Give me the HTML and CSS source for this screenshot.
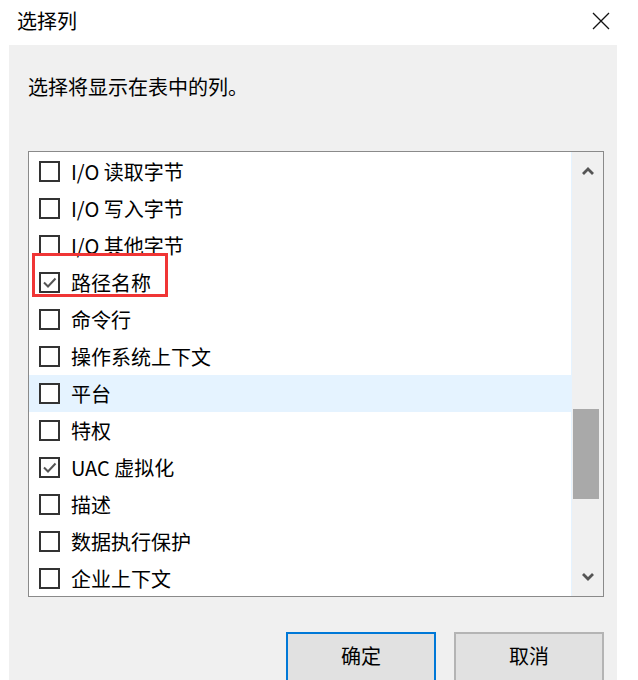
FILE: index.html
```html
<!DOCTYPE html>
<html lang="zh-CN">
<head>
<meta charset="utf-8">
<title>选择列</title>
<link rel="stylesheet" href="styles.css">
</head>
<body>
<div class="window">
  <div class="titlebar">
    <span class="title">选择列</span>
    <svg class="close" width="18" height="18" viewBox="0 0 18 18"><path d="M1 1 L17 17 M17 1 L1 17" stroke="#111" stroke-width="1.3" fill="none"/></svg>
  </div>
  <div class="content">
    <p class="prompt">选择将显示在表中的列。</p>
    <div class="listwrap">
      <div class="list">
        <div class="rows">
          <div class="row"><span class="cb"></span><span class="lbl">I/O 读取字节</span></div>
          <div class="row"><span class="cb"></span><span class="lbl">I/O 写入字节</span></div>
          <div class="row"><span class="cb"></span><span class="lbl">I/O 其他字节</span></div>
          <div class="row"><span class="cb"><svg viewBox="0 0 17 17" width="17" height="17"><polyline points="3,8.5 7,12.5 14.5,4.5" fill="none" stroke="#555" stroke-width="2"/></svg></span><span class="lbl">路径名称</span></div>
          <div class="row"><span class="cb"></span><span class="lbl">命令行</span></div>
          <div class="row"><span class="cb"></span><span class="lbl">操作系统上下文</span></div>
          <div class="row hover"><span class="cb"></span><span class="lbl">平台</span></div>
          <div class="row"><span class="cb"></span><span class="lbl">特权</span></div>
          <div class="row"><span class="cb"><svg viewBox="0 0 17 17" width="17" height="17"><polyline points="3,8.5 7,12.5 14.5,4.5" fill="none" stroke="#555" stroke-width="2"/></svg></span><span class="lbl">UAC 虚拟化</span></div>
          <div class="row"><span class="cb"></span><span class="lbl">描述</span></div>
          <div class="row"><span class="cb"></span><span class="lbl">数据执行保护</span></div>
          <div class="row"><span class="cb"></span><span class="lbl">企业上下文</span></div>
        </div>
        <div class="scrollbar">
          <div class="sbtn"><svg width="12" height="8" viewBox="0 0 12 8"><polyline points="1,7 6,2 11,7" fill="none" stroke="#555" stroke-width="2.8"/></svg></div>
          <div class="track"><div class="thumb"></div></div>
          <div class="sbtn"><svg width="12" height="8" viewBox="0 0 12 8"><polyline points="1,1 6,6 11,1" fill="none" stroke="#555" stroke-width="2.8"/></svg></div>
        </div>
      </div>
      <div class="mark"></div>
    </div>
    <div class="buttons">
      <button class="btn primary">确定</button>
      <button class="btn">取消</button>
    </div>
  </div>
</div>
</body>
</html>
```

FILE: styles.css
```css
html, body {
  margin: 0;
  padding: 0;
  background: #ffffff;
}
body {
  width: 638px;
  height: 680px;
  overflow: hidden;
  font-family: "Noto Sans CJK SC", "Noto Sans", sans-serif;
  color: #000;
}
.window {
  width: 638px;
  height: 680px;
  display: flex;
  flex-direction: column;
}
.titlebar {
  height: 45px;
  flex: none;
  display: flex;
  align-items: center;
  justify-content: space-between;
  padding: 0 28px 4px 17px;
  box-sizing: border-box;
}
.title {
  font-size: 20px;
  line-height: 28px;
}
.close {
  display: block;
  margin-top: 0;
}
.content {
  margin-left: 9px;
  width: 608px;
  flex: 1;
  background: #f0f0f0;
  padding: 28px 13px 0 19px;
  box-sizing: border-box;
}
.prompt {
  margin: 0;
  font-size: 20px;
  line-height: 28px;
}
.listwrap {
  position: relative;
  margin-top: 50px;
  width: 576px;
  height: 446px;
}
.list {
  width: 576px;
  height: 446px;
  box-sizing: border-box;
  border: 1px solid #8a8a8a;
  background: #fff;
  display: flex;
  overflow: hidden;
}
.rows {
  width: 542px;
  padding-top: 1px;
  border-right: 1px solid #e5f3ff;
  display: flex;
  flex-direction: column;
  overflow: hidden;
}
.row {
  height: 37px;
  flex: none;
  display: flex;
  align-items: center;
  padding-left: 10px;
  font-size: 20px;
}
.row.hover {
  background: #e5f3ff;
}
.cb {
  width: 21px;
  height: 21px;
  box-sizing: border-box;
  border: 2px solid #333;
  background: #fff;
  margin-right: 11px;
  display: flex;
  align-items: center;
  justify-content: center;
  flex: none;
}
.cb svg {
  display: block;
}
.lbl {
  line-height: 28px;
  margin-top: 0;
}
.scrollbar {
  width: 31px;
  background: #f0f0f0;
  display: flex;
  flex-direction: column;
}
.sbtn {
  height: 38px;
  flex: none;
  display: flex;
  align-items: center;
  justify-content: center;
}
.track {
  flex: 1;
}
.thumb {
  margin: 219px 0 0 1px;
  width: 26px;
  height: 90px;
  background: #a9a9a9;
}
.mark {
  position: absolute;
  left: 4px;
  top: 102px;
  width: 136px;
  height: 44px;
  box-sizing: border-box;
  border: 3px solid #f03535;
}
.buttons {
  margin-top: 35px;
  display: flex;
  justify-content: flex-end;
  gap: 18px;
}
.btn {
  width: 150px;
  height: 50px;
  box-sizing: border-box;
  background: #e1e1e1;
  border: 2px solid #b4b4b4;
  font-family: "Noto Sans CJK SC", "Noto Sans", sans-serif;
  font-size: 20px;
  line-height: 28px;
  color: #000;
  padding: 0 0 2px;
  margin: 0;
}
.btn.primary {
  border-color: #0078d7;
}
```
